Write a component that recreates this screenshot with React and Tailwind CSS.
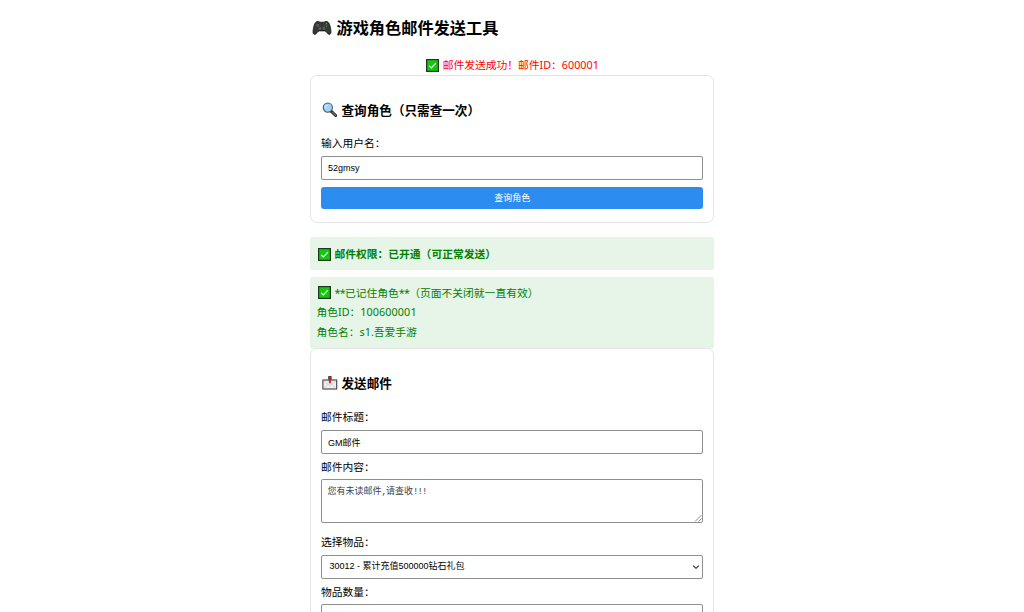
import React from 'react';

const CheckIcon = () => (
  <svg viewBox="0 0 13 13" className="mr-1 h-[13px] w-[13px] shrink-0">
    <rect x="0.6" y="0.6" width="11.8" height="11.8" fill="#16c60c" stroke="#1b3a1b" strokeWidth="1.2" />
    <path d="M3.2 6.9 5.3 9 9.9 4.2" fill="none" stroke="#f4fff4" strokeWidth="1.2" />
  </svg>
);

const GamepadIcon = () => (
  <svg viewBox="0 0 20 16" className="mr-[5px] h-4 w-5 shrink-0">
    <path d="M5 1.6C6.400 1 7.300 1.900 8 2.200h4c.7-.3 1.600-1.200 3-.6 1.700.6 2.600 2.400 3.200 5 .6 2.500 1 5.200.6 6.700-.3 1.100-1.600 1.400-2.600.7-1.300-.9-1.900-2.700-3.400-3.100H7.200c-1.500.4-2.100 2.200-3.400 3.100-1 .7-2.300.4-2.600-.7-.4-1.500 0-4.200.6-6.700.6-2.600 1.500-4.400 3.200-5Z" fill="#383838" stroke="#171717" strokeWidth="0.8" />
    <circle cx="5.800" cy="5.200" r="1.500" fill="#5a5a5a" />
    <circle cx="12" cy="8.400" r="1.400" fill="#5a5a5a" />
    <path d="M8 7.200v2.600M6.700 8.500h2.600" stroke="#707070" strokeWidth="0.9" />
    <circle cx="14.400" cy="3.600" r="0.600" fill="#c9a227" />
    <circle cx="15.700" cy="5" r="0.600" fill="#c0392b" />
    <circle cx="13.100" cy="5" r="0.600" fill="#2f6fb5" />
    <circle cx="14.400" cy="6.300" r="0.600" fill="#3e9a3e" />
  </svg>
);

const SearchIcon = () => (
  <svg viewBox="0 0 16 16" className="mr-1 ml-[0.500px] h-4 w-4 shrink-0">
    <path d="m9.300 9.300 4.400 4.200" stroke="#222" strokeWidth="3" strokeLinecap="round" />
    <path d="m10.200 10.100 3.400 3.300" stroke="#7a7a7a" strokeWidth="1.300" strokeLinecap="round" />
    <circle cx="5.800" cy="5.600" r="4.600" fill="#9fd3f7" stroke="#46535e" strokeWidth="1.100" />
    <path d="M3.300 5.900a2.600 2.600 0 0 1 2.500-2.700" fill="none" stroke="#d9f0ff" strokeWidth="1" />
  </svg>
);

const OutboxIcon = () => (
  <svg viewBox="0 0 16 16" className="mr-1 ml-[0.500px] h-4 w-4 shrink-0">
    <rect x="0.900" y="5" width="13.800" height="9" fill="#efefef" stroke="#3c3c3c" strokeWidth="1.100" />
    <path d="m1.500 13.500 4.800-4.300M14.100 13.500 9.500 9.200M1.500 5.600l6.400 4.900 6.200-4.900" fill="none" stroke="#c4c4c4" strokeWidth="0.700" />
    <rect x="6.200" y="1.100" width="3.400" height="3.600" fill="#333" />
    <path d="M7.900 1.700v6.600" stroke="#e81224" strokeWidth="1.900" />
  </svg>
);

const fieldClass =
  "flex h-6 w-[382.400px] items-center rounded-[2px] border border-[#8f8f8f] bg-white px-[6px] font-['Liberation_Sans','Noto_Sans_CJK_SC',sans-serif] text-[9px] text-black outline-none";

const Label = ({ children }) => <label className="block h-[18px] leading-[18px]">{children}</label>;

const App = () => {
  return (
    <div className="h-[612px] overflow-hidden bg-white font-['Noto_Sans','Noto_Sans_CJK_SC',sans-serif] text-[10.77px] text-black">
      <div className="mx-auto w-[404px] pt-[16px]">
        <h2 className="flex h-6 items-center pl-[1.500px] text-[16.200px] font-bold">
          <GamepadIcon />
          游戏角色邮件发送工具
        </h2>

        <p className="mt-4 flex h-[18px] items-center justify-center pl-[0.500px] text-[#ff0000]">
          <CheckIcon />
          邮件发送成功！邮件ID：600001
        </p>

        {/* Role lookup */}
        <section className="mt-px h-[148px] rounded-[7px] border border-[#e5e5e5] pl-[10px] pt-6">
          <h3 className="mb-[14px] flex h-5 items-center text-[12.600px] font-bold">
            <SearchIcon />
            <span className="pt-[2px]">查询角色（只需查一次）</span>
          </h3>
          <Label>输入用户名：</Label>
          <input className={`${fieldClass} mt-1`} defaultValue="52gmsy" />
          <button className="mt-[7px] flex h-[22px] w-[382.400px] items-center justify-center rounded-[3px] bg-[#2d8cf0] pt-[2px] font-['Liberation_Sans','Noto_Sans_CJK_SC',sans-serif] text-[9px] text-white">
            查询角色
          </button>
        </section>

        {/* Mail permission */}
        <div className="mt-[14px] flex h-[32.500px] items-center rounded-[3px] bg-[#e6f5e8] pl-[7.500px] pt-[2px] font-bold text-[#008000]">
          <CheckIcon />
          邮件权限：已开通（可正常发送）
        </div>

        {/* Remembered role */}
        <div className="mt-[7px] h-[72px] rounded-[3px] bg-[#e6f5e8] px-[6.500px] pt-[6.500px] leading-[19.400px] text-[#008000]">
          <p className="flex items-center pl-px">
            <CheckIcon />
            <span className="tracking-[-0.700px]">**</span>已记住角色<span className="tracking-[-0.700px]">**</span>（页面不关闭就一直有效）
          </p>
          <p>角色ID：<span className="tracking-[0.100px]">100600001</span></p>
          <p>角色名：s1.吾爱手游</p>
        </div>

        {/* Send mail */}
        <section className="mt-[-0.500px] h-[420px] rounded-[7px] border border-[#e5e5e5] bg-white pl-[10px] pt-6">
          <h3 className="mb-[15px] flex h-5 items-center text-[12.600px] font-bold">
            <OutboxIcon />
            <span className="pt-[2px]">发送邮件</span>
          </h3>
          <Label>邮件标题：</Label>
          <input className={`${fieldClass} mt-1`} defaultValue="GM邮件" />
          <div className="mt-1">
            <Label>邮件内容：</Label>
          </div>
          <div className="mt-[3px] flex h-[44px] w-[382.400px] justify-between rounded-[2px] border border-[#8f8f8f] pl-[5.500px] font-['Liberation_Mono','Noto_Sans_CJK_SC',monospace] text-[9px] text-[#444]">
            <p className="pt-[6px] leading-[13px]">
              您有未读邮件<span className="tracking-[-0.900px]">,</span>请查收<span className="tracking-[-0.900px]">!!!</span>
            </p>
            <svg viewBox="0 0 8 8" className="h-2 w-2 self-end">
              <path d="M1 7.500 7.500 1M4.500 7.500l3-3" stroke="#777" strokeWidth="0.800" />
            </svg>
          </div>
          <div className="mt-[10px]">
            <Label>选择物品：</Label>
          </div>
          <div className={`${fieldClass} mt-1 justify-between pl-[7.500px] pr-[2px]`}>
            <span>30012 - 累计充值500000钻石礼包</span>
            <svg viewBox="0 0 8 8" className="h-2 w-2">
              <path d="m1.200 2.700 2.800 2.600 2.800-2.600" fill="none" stroke="#222" strokeWidth="1.100" />
            </svg>
          </div>
          <div className="mt-1">
            <Label>物品数量：</Label>
          </div>
          <input className={`${fieldClass} mt-[3px]`} />
        </section>
      </div>
    </div>
  );
};

export default App;
